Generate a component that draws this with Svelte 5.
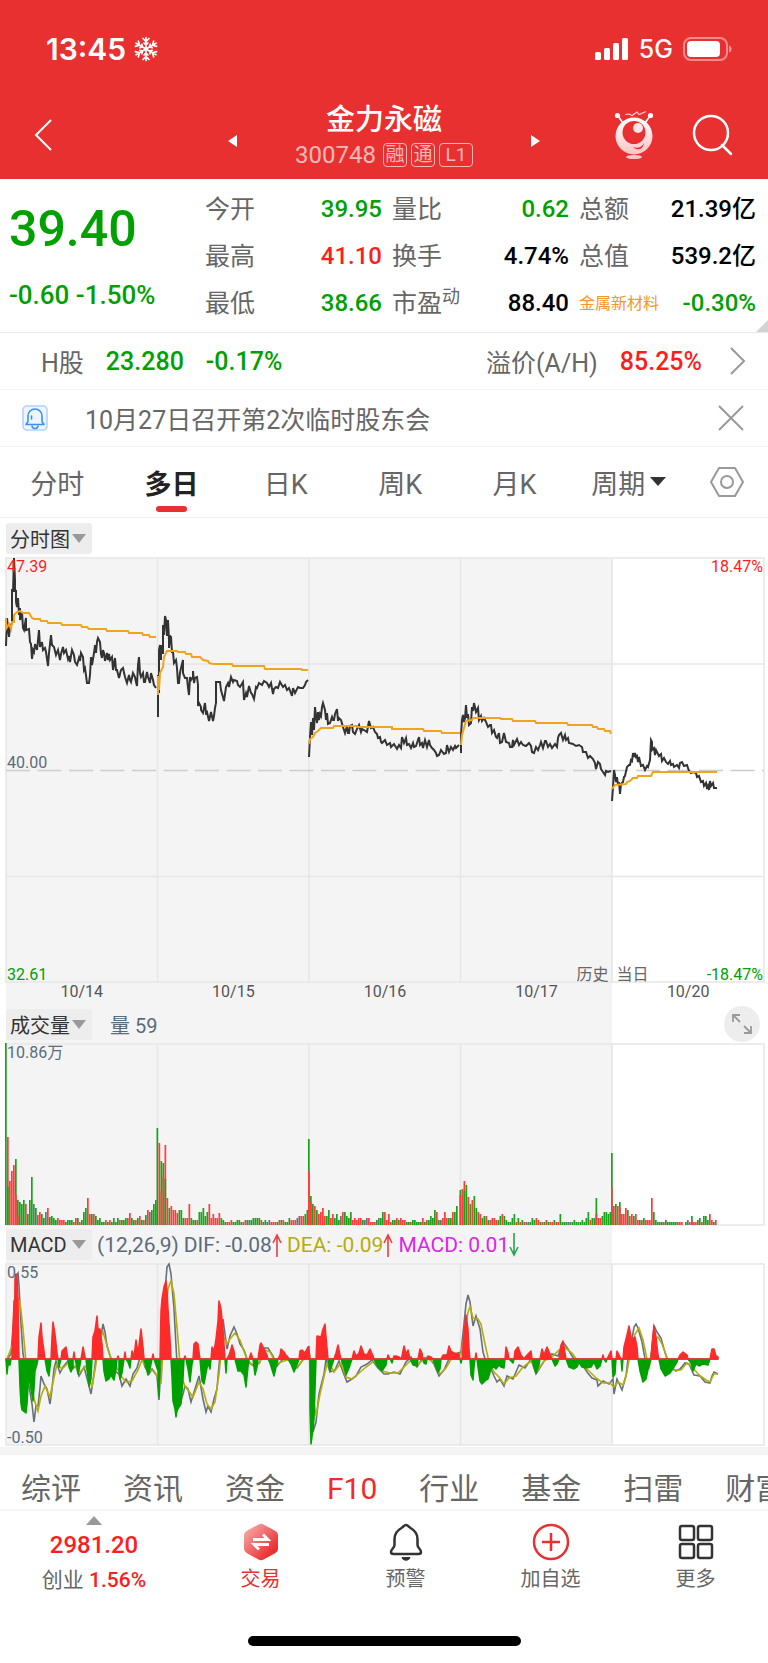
<script lang="ts">

    interface Stat {
        label: string;
        value: string;
        tone?: string;
        sup?: string;
        sector?: boolean;
    }

    const stats: Stat[] = [
        { label: '今开', value: '39.95', tone: 'down' },
        { label: '量比', value: '0.62', tone: 'down' },
        { label: '总额', value: '21.39亿' },
        { label: '最高', value: '41.10', tone: 'up' },
        { label: '换手', value: '4.74%' },
        { label: '总值', value: '539.2亿' },
        { label: '最低', value: '38.66', tone: 'down' },
        { label: '市盈', value: '88.40', sup: '动' },
        { label: '金属新材料', value: '-0.30%', tone: 'down', sector: true }
    ];

    const periods = ['分时', '多日', '日K', '周K', '月K', '周期'];
    let period = $state('多日');

    const sections = ['综评', '资讯', '资金', 'F10', '行业', '基金', '扫雷', '财富'];
    let section = $state('F10');

    const dates = ['10/14', '10/15', '10/16', '10/17', '10/20'];

    const DAY = 151.5;
    const dayLines = [1, 2, 3, 4].map((n) => n * DAY);

    // one polyline per trading day
    const prices = [
        '0,88 1,60 3,79 4,69 6,65 6,31 7,34 8,0 9,22 9,34 10,32 10,44 11,49 12,40 13,57 14,50 14,62 16,54 17,70 18,72 20,60 20,72 23,71 24,84 25,86 26,101 27,92 28,94 29,86 31,92 33,72 34,89 36,84 37,92 39,90 40,94 42,108 43,95 45,77 46,87 48,89 50,97 52,92 54,102 55,96 57,89 58,95 60,92 62,101 63,98 64,104 66,92 68,97 69,104 71,107 73,100 74,103 75,95 77,99 78,112 79,110 81,125 83,125 84,117 85,99 86,107 88,95 89,87 90,95 91,84 92,80 94,84 95,96 96,100 97,92 98,95 99,103 101,95 102,102 103,96 104,102 106,99 107,112 109,100 110,112 111,112 113,120 115,112 117,110 119,119 121,125 123,117 124,122 125,124 127,115 129,119 130,124 131,128 132,107 133,99 134,115 135,119 137,115 138,124 139,124 141,114 142,119 144,125 145,115 147,122 148,127 150,130',
        '152,159 152,117 153,135 153,92 154,87 155,102 155,87 156,95 157,95 157,67 158,77 159,58 160,62 161,78 162,62 163,82 163,90 164,78 165,79 166,94 167,94 168,105 170,102 171,110 172,125 173,125 174,115 175,110 177,102 177,115 179,120 181,120 182,130 183,137 184,119 185,122 187,119 187,113 188,125 189,120 191,119 192,127 192,148 193,145 195,149 195,152 197,155 199,145 200,155 201,154 203,163 205,154 207,163 208,158 209,150 210,145 210,124 214,124 215,132 218,143 220,129 222,125 223,129 225,119 227,124 228,122 231,123 232,127 234,129 237,124 238,142 240,135 241,139 243,128 245,135 246,136 248,141 250,129 251,130 253,125 256,127 258,123 261,125 263,129 265,125 267,136 268,131 270,129 272,130 274,124 277,129 279,127 281,132 283,130 286,138 287,130 289,135 292,129 294,130 297,130 299,127 300,124 302,122',
        '303,199 304,179 305,164 306,177 307,160 308,172 309,149 310,158 311,165 312,154 313,162 314,156 315,158 316,149 317,145 319,152 320,162 321,155 322,166 324,165 326,159 327,162 328,162 329,156 331,151 332,163 333,160 335,162 337,169 339,175 341,168 342,175 343,175 344,168 346,167 347,174 349,176 351,171 353,167 355,174 356,171 358,172 361,174 363,163 365,170 367,169 369,174 371,176 372,180 374,179 375,184 376,185 379,182 381,187 384,185 385,189 388,186 391,191 393,187 395,190 396,179 398,185 400,180 401,187 403,186 405,190 407,185 408,189 410,188 412,182 413,179 414,187 416,185 417,190 419,182 421,189 423,182 424,187 426,190 428,192 430,195 431,198 433,197 435,192 438,196 440,195 441,187 443,194 445,189 447,192 449,188 450,190 453,187',
        '455,195 455,177 456,162 457,157 458,164 459,160 460,147 461,160 462,156 463,167 465,165 466,149 467,153 468,145 470,154 472,150 473,162 475,158 476,163 478,160 480,164 482,169 484,167 485,167 486,175 488,172 490,179 491,180 493,175 494,185 496,184 498,175 500,184 503,185 504,189 506,189 507,182 508,187 511,181 513,187 515,184 517,187 520,188 523,185 525,188 526,194 528,195 530,189 532,192 534,187 535,184 537,190 539,183 540,183 542,189 544,186 546,190 549,186 551,189 552,180 553,177 555,175 557,182 559,177 560,182 562,180 563,185 567,186 570,188 573,187 576,189 577,194 580,194 582,200 584,198 587,201 589,205 590,211 592,204 594,206 595,211 597,214 599,217 600,213 602,214 605,213',
        '606,243 607,229 608,212 609,217 610,224 611,219 612,227 613,224 614,236 615,226 617,224 618,219 619,218 621,209 623,207 624,207 625,202 626,203 627,195 628,199 629,195 630,199 631,198 632,204 633,199 635,208 637,207 639,212 641,208 642,209 644,202 645,182 646,184 646,192 648,190 649,197 650,192 653,198 655,196 656,203 658,200 660,204 662,206 664,203 665,207 667,206 668,209 671,207 673,210 674,205 676,204 678,208 681,207 683,213 685,215 687,214 690,215 691,219 693,218 695,224 697,223 698,228 700,225 701,231 702,228 703,232 704,223 705,228 707,225 708,230 711,230'
    ];

    const averages = [
        '0,60 0,71 3,66 5,71 6,64 8,64 8,57 11,54 14,53 17,55 23,55 26,60 28,61 34,61 35,63 41,63 42,65 55,65 56,67 75,67 76,69 81,69 83,71 100,71 101,73 122,73 123,75 136,75 137,77 143,77 144,79 150,79',
        '152,137 152,118 153,132 154,115 157,109 158,99 160,95 161,93 171,93 172,94 179,94 180,96 185,96 186,99 194,99 197,102 202,103 203,105 207,106 226,106 227,108 258,108 259,111 295,111 296,112 302,112',
        '303,186 304,181 307,179 309,175 312,173 315,170 317,170 327,170 328,168 351,168 352,169 386,169 386,171 417,171 418,173 435,173 436,175 454,175',
        '455,187 456,177 458,170 460,163 466,162 467,160 494,160 495,161 506,161 507,163 529,163 530,165 561,165 562,167 586,167 587,169 591,169 592,171 598,171 599,173 604,173 605,176',
        '606,231 609,227 620,226 621,224 624,223 627,220 631,220 632,218 645,218 647,214 711,214'
    ];

    // g = down, r = up, s = flat; "g86/r54" is a second bar over the first
    const volumes = [
        'g182 r88/g38 r44 r54 r60 g66/r30 g25/r10 g23 g21 g25 r21 g11 g25 g48 s21 g17 r10 r13 g11 g7 s13 r17 g8 g9 g7 g5 r7 r5 r5 r5 g3 g5 g5 g5 r3 r7 g7 r3 g5 g13 g17 r27 r11 g11 r11 g9 g5 g7 g3 g3 r5 g3 r5 g3 g7 g3 g7 r5 g5 g5 g7 r7 r12 g7 g5 r5 g7 r9 g5 r5 g10 r15 s13 g15 g21 g25',
        'g97 r82 g64/r34 g62/r48 r80/g46 r27 g17 r19 r15 r15 r12 g15 g15 g7 r7 r7 r21 g7 g5 g5 r5 g13 g13 g17 g9 g13 r21 r7 r11 r7 r7 r12 g7 g5 g3 r3 r3 r5 g3 g3 g5 g5 g3 r3 r5 g5 s5 g5 g7 g7 g7 g7 r5 g3 g5 g3 s5 r3 r3 r3 g3 r5 g5 r5 g3 g3 g7 r5 r5 r5 s7 s9 r9 r9 g11 g15',
        'g86/r54 g29/r23 g21 r19 g15 r11 r13 r17 r9 g9 g15 r7 r11 g7 g11 g5 s9 r13 g13 g9 g7 g13 r5 r7 r5 r7 r7 g5 s5 s7 r7 r3 r3 r3 g5 s7 g7 g13 r13 r5 r11 r3 g5 g5 r7 g5 r7 r5 r5 g3 g3 r3 g5 g5 g3 g3 g3 r7 g3 r5 g5 g9 g7 g15 r13 g5 s5 r7 r13 r7 g7 g7 r13 g13 g19',
        'g35/r30 r36 r44/g34 g40 r28 g21 r25 g29 g17 r13 r11 g7 g9 r9 g5 r5 r7 r7 r5 g5 g9 r11 g9 g5 g3 g3 g7 g11 r3 g7 r3 g5 r3 s3 s3 g3 g7 g5 r7 r5 g3 r3 g3 r5 g3 r3 r3 g5 r3 r3 g11 g3 g3 g3 s3 s3 g3 g5 g3 g3 g3 g5 g3 g7 g13 r5 g7 g7 g27/r11 r7 r7 g9 g13 g13 g11 g13',
        'g72/r38 r19 g21 r19 g23/r17 r11 r11 r17 g15 r9 r11 g9 r11 r5 g5 r5 g7 r5 r5 r5 r27 g13 g5 g3 s3 g3 r3 g5 g3 g3 g3 g3 g3 r3 r3 r3 g0 g3 s5 r3 g9/r5 r3 r3 g5 g7 r3 g9 g9 g5 r11 r5 g3 r5'
    ];

    const fills: Record<string, string> = { g: '#19a319', r: '#ff3b3b', s: '#66717c' };

    const bars = volumes.flatMap((day, d) =>
        day.split(' ').flatMap((slot, i) =>
            slot.split('/').map((bar) => ({
                x: d * DAY + i * 2,
                h: Number(bar.slice(1)),
                fill: fills[bar[0]]
            }))
        )
    );

    const dif = '0,97 5,90 8,50 10,12 12,9 13,22 15,60 17,90 20,105 24,128 26,140 28,158 30,142 32,142 34,124 35,112 38,120 41,125 44,140 46,125 48,105 50,97 54,109 57,103 62,97 66,105 70,102 73,112 78,103 82,118 85,130 88,110 92,75 95,72 97,60 99,68 101,82 106,98 110,108 113,110 116,122 120,115 124,122 127,110 131,104 135,90 139,103 143,110 146,105 151,112 153,136 155,100 158,40 161,3 163,0 165,10 168,45 171,100 174,140 177,130 179,122 182,125 185,138 189,125 193,112 197,135 200,148 202,142 205,148 208,135 211,125 214,90 217,55 221,85 224,72 228,63 231,70 234,80 238,86 242,98 248,102 254,98 258,84 262,84 267,92 271,102 276,96 281,92 286,98 291,104 296,97 303,82 305,130 307,168 310,158 313,130 318,110 320,95 324,108 329,106 333,97 337,108 341,118 346,115 350,112 355,103 361,100 366,96 372,104 378,110 382,110 388,108 394,110 400,98 405,93 411,103 416,95 422,93 428,100 433,112 438,106 443,95 449,90 455,88 458,60 460,40 462,31 464,38 467,62 470,52 474,65 477,88 480,98 484,102 488,112 491,118 494,115 498,122 501,112 507,115 513,101 519,104 525,95 530,110 535,102 540,94 546,90 552,92 557,78 562,85 566,92 570,97 576,100 581,108 586,114 591,116 592,122 597,117 603,120 607,115 608,130 611,115 616,126 620,112 622,95 626,75 628,63 630,60 632,64 636,78 639,95 643,103 646,85 648,62 651,68 655,74 658,85 661,95 666,104 670,107 674,105 679,99 683,100 688,111 694,112 699,118 704,119 706,112 708,108 712,110';
    const dea = '0,97 7,80 10,40 12,35 14,38 17,65 20,98 25,115 28,135 32,147 35,132 39,122 44,133 47,118 51,100 56,105 62,99 68,102 74,108 80,102 86,123 90,100 94,75 97,68 100,78 104,92 109,100 115,112 120,118 126,117 132,106 136,96 142,106 148,107 153,115 155,120 158,70 162,25 165,17 168,30 172,75 175,112 179,122 187,133 193,118 197,125 201,140 205,145 209,138 213,110 217,72 221,80 224,75 229,69 234,76 240,93 245,100 253,100 259,86 264,88 270,100 278,97 285,95 291,103 298,95 303,86 306,125 310,152 314,130 319,108 322,97 328,108 335,99 340,113 346,115 352,110 360,103 368,97 376,107 384,109 392,109 400,101 406,95 412,100 420,94 428,98 434,110 440,104 447,92 455,90 459,68 462,48 464,43 467,54 472,55 475,60 479,80 483,98 488,108 493,113 498,120 503,114 510,112 517,103 525,97 531,107 538,97 547,92 557,82 566,89 574,100 582,106 590,114 597,119 604,119 608,123 612,118 617,121 621,108 625,85 629,70 633,64 637,76 641,95 644,100 648,75 652,73 656,80 662,96 668,106 675,106 681,99 687,104 693,111 700,116 704,118 708,110 712,110';

    // x,value pairs, value is the height over (or under) the zero line
    const histogram = '0,0 1,-15 2,-6 4,-6 5,0 6,2 7,30 8,58 9,60 9,80 10,85 11,83 12,60 13,0 14,-28 15,-45 16,-51 20,-54 21,-45 22,-28 24,-18 25,-30 27,-42 28,-30 29,-12 31,-5 32,0 33,22 35,36 36,22 38,8 39,0 41,-12 43,-17 44,-8 45,0 46,22 47,37 49,25 51,6 52,0 53,-8 55,0 56,8 58,10 60,12 61,6 62,0 63,-8 65,-13 67,-8 67,0 68,7 69,0 71,-8 72,-15 74,-6 75,0 77,12 79,2 80,0 81,-10 83,-27 85,-20 86,0 87,22 89,28 91,43 92,30 94,30 96,15 97,0 98,-12 100,-22 103,-20 105,-16 108,-21 110,-10 111,0 112,3 113,0 113,-12 114,-20 116,-14 118,0 119,7 120,0 122,-3 124,-9 125,0 126,8 128,2 130,19 132,5 134,22 135,30 137,12 138,0 140,-8 142,-16 144,-10 145,-5 146,0 147,5 148,0 150,-6 152,-12 153,-37 154,0 155,48 156,60 158,72 160,78 161,68 162,50 164,20 165,0 166,-18 167,-42 169,-50 170,-58 171,-52 173,-48 175,-45 177,-20 178,0 179,3 180,0 182,-10 184,-23 186,-5 187,0 188,15 190,17 192,15 194,0 195,-12 196,-22 198,-25 200,-14 202,-4 204,-10 205,0 206,12 208,8 210,20 212,38 213,58 215,50 217,30 218,15 219,0 220,-14 221,0 223,4 225,10 226,14 228,8 229,0 232,-12 235,-12 238,-16 240,-28 242,-8 243,0 245,6 247,0 249,-16 251,-8 252,0 254,14 255,16 258,10 261,4 262,0 264,-4 268,-17 270,-8 272,0 274,4 275,10 278,7 281,2 282,0 285,-5 288,-13 290,-8 292,-3 293,0 294,8 296,9 299,6 302,12 303,9 304,0 304,-50 305,-85 307,-70 308,-60 310,0 311,23 315,22 317,30 319,35 320,22 322,0 324,-12 326,-6 328,0 330,6 332,14 334,4 335,0 338,-8 340,-16 343,-9 346,0 348,8 350,3 353,6 355,13 358,5 361,4 364,10 367,3 368,0 372,-8 376,-12 380,-6 381,0 382,4 384,0 386,-4 387,0 388,3 390,3 393,2 395,0 396,3 398,13 400,5 402,9 404,0 407,-6 411,-7 412,0 414,10 416,6 417,0 418,-4 420,-5 421,0 422,3 425,2 427,0 430,-8 432,-13 434,-10 435,0 437,4 441,4 443,13 445,8 448,6 453,5 454,0 455,-4 456,0 458,25 460,44 462,30 463,10 464,0 465,-16 467,-21 468,-8 469,0 470,6 471,0 472,-8 474,-22 476,-25 479,-22 482,-20 485,-10 488,-8 490,-10 493,-6 495,-8 498,-9 499,0 500,12 502,6 503,0 507,-4 508,0 509,8 512,12 515,4 518,0 521,4 525,8 526,0 528,-8 530,-14 533,-6 534,0 536,10 538,4 541,12 544,5 546,0 549,-7 551,-5 553,0 555,14 557,18 559,6 560,0 563,-8 568,-10 571,-8 573,-3 576,-8 580,-9 585,-8 588,-3 591,-10 594,-7 596,0 597,4 598,0 600,-3 601,0 602,2 605,8 606,0 607,-18 609,-15 610,0 611,8 613,4 615,0 616,-12 617,0 618,12 621,24 623,33 625,22 627,20 629,22 631,12 632,0 634,-12 637,-23 640,-20 643,-6 645,0 646,15 648,33 650,22 652,4 653,0 655,-10 659,-17 664,-14 668,-8 671,-3 672,0 674,4 677,7 681,4 682,0 685,-4 687,-12 690,-5 693,-7 697,-5 702,-6 704,0 706,10 708,10 710,3 712,2'
        .split(' ')
        .map((p) => p.split(',').map(Number));

    const ZERO = 95;

    function area(sign: number): string {
        const top = histogram.map(([x, v]) => `${x},${v * sign > 0 ? ZERO - v : ZERO}`);
        return `0,${ZERO} ${top.join(' ')} 712,${ZERO}`;
    }

</script>

{#snippet grid(height: number)}
    {#each dayLines as x}
        <line class="grid-line" x1={x} x2={x} y1="0" y2={height} />
    {/each}
    <rect class="grid-line" x="0" y="0" width="758" height={height} />
{/snippet}

<div class="app">
    <header>
        <div class="status-bar">
            <div class="clock">
                <span>13:45</span>
                <svg width="24" height="26" viewBox="0 0 24 26" fill="none" stroke="#fff" stroke-width="1.700" stroke-linecap="round">
                    {#each [0, 60, 120, 180, 240, 300] as angle}
                        <path transform="rotate({angle} 12 13)" d="M12 13V1.500M9 2.500l3 3 3-3M10 7l2 2 2-2" />
                    {/each}
                </svg>
            </div>
            <div class="signal">
                <svg width="34" height="24" viewBox="0 0 34 24" fill="#fff">
                    <rect x="0" y="15" width="6" height="8" rx="1.500" />
                    <rect x="9" y="11" width="6" height="12" rx="1.500" />
                    <rect x="18" y="6" width="6" height="17" rx="1.500" />
                    <rect x="27" y="1" width="6" height="22" rx="1.500" />
                </svg>
                <span>5G</span>
                <svg width="50" height="24" viewBox="0 0 50 24">
                    <rect x="1" y="1" width="43" height="22" rx="7" fill="none" stroke="#fff" stroke-opacity="0.450" stroke-width="2" />
                    <rect x="4" y="4" width="33" height="16" rx="4" fill="#fff" />
                    <path d="M46 8.500c3.500 1 3.500 6 0 7z" fill="#fff" fill-opacity="0.500" />
                </svg>
            </div>
        </div>
        <div class="title-bar">
            <button class="back" aria-label="返回">
                <svg width="18" height="32" viewBox="0 0 18 32" fill="none" stroke="#fff" stroke-width="2"><path d="M17 1L2 16l15 15" /></svg>
            </button>
            <div class="switcher">
                <button aria-label="上一只"><svg width="9" height="12" viewBox="0 0 9 12"><path d="M9 0v12L0 6z" fill="#fff" /></svg></button>
                <div class="title">
                    <h1>金力永磁</h1>
                    <div class="code">
                        <span>300748</span>
                        <i>融</i><i>通</i><i class="wide">L1</i>
                    </div>
                </div>
                <button aria-label="下一只"><svg width="9" height="12" viewBox="0 0 9 12"><path d="M0 0v12l9-6z" fill="#fff" /></svg></button>
            </div>
            <div class="actions">
                <button aria-label="助手">
                    <svg width="40" height="48" viewBox="0 0 40 48">
                        <defs>
                            <linearGradient id="robot" x1="0" y1="0" x2="0" y2="1">
                                <stop offset="0" stop-color="#fff" />
                                <stop offset="1" stop-color="#ffc4c6" />
                            </linearGradient>
                        </defs>
                        <path d="M4 5l5 7M36 5l-5 7" stroke="#fff" stroke-width="1.600" />
                        <path d="M11 3.500l4-.5 3 1.500L23 1l2 2.500L32 .5" fill="none" stroke="#ffd5d5" stroke-width="1.100" />
                        <circle cx="3.500" cy="4.500" r="2.600" fill="#fff" />
                        <circle cx="36.500" cy="4.500" r="2.600" fill="#fff" />
                        <circle cx="20" cy="25" r="18.500" fill="url(#robot)" />
                        <circle cx="20" cy="21.500" r="11.500" fill="#e93030" />
                        <circle cx="24" cy="17" r="5" fill="#ffe4e5" />
                        <path d="M19 36c5 2 9 0 11-4-1 7-7 8-11 4z" fill="#e93030" />
                        <ellipse cx="20" cy="46" rx="8" ry="2" fill="#ffc4c6" />
                    </svg>
                </button>
                <button aria-label="搜索">
                    <svg width="42" height="42" viewBox="0 0 42 42" fill="none" stroke="#fff" stroke-width="2.500" stroke-linecap="round">
                        <circle cx="19" cy="19" r="17" />
                        <path d="M30 31l9 9" />
                    </svg>
                </button>
            </div>
        </div>
    </header>

    <section class="quote">
        <div class="last down">
            <strong>39.40</strong>
            <span>-0.60 -1.50%</span>
        </div>
        <dl class="stats">
            {#each stats as stat}
                <div class="stat">
                    <dt class:sector={stat.sector}>{stat.label}{#if stat.sup}<sup>{stat.sup}</sup>{/if}</dt>
                    <dd class={stat.tone}>{stat.value}</dd>
                </div>
            {/each}
        </dl>
        <svg class="corner" width="12" height="12" viewBox="0 0 12 12"><path d="M12 0v12H0z" fill="#d3d3d3" /></svg>
    </section>

    <a class="row h-share" href="#h-share">
        <span>H股</span>
        <b class="down">23.280</b>
        <b class="down">-0.17%</b>
        <span class="premium">溢价(A/H)</span>
        <b class="up">85.25%</b>
        <svg width="16" height="28" viewBox="0 0 16 28" fill="none" stroke="#999" stroke-width="2"><path d="M1 1l13 13L1 27" /></svg>
    </a>

    <div class="row notice">
        <svg width="26" height="26" viewBox="0 0 26 26" fill="none" stroke="#3b8ff3" stroke-width="1.600">
            <rect x="1" y="1" width="24" height="24" rx="4" fill="#eef5ff" stroke="#b3d2fb" />
            <path d="M4 19.500h18l-2-3v-5.500a7 7 0 0 0-14 0v5.500z" stroke-linejoin="round" />
            <path d="M10 20.500a3 3 0 0 0 6 0" />
            <path d="M9.500 14v-3" stroke-linecap="round" />
        </svg>
        <span>10月27日召开第2次临时股东会</span>
        <button aria-label="关闭">
            <svg width="26" height="26" viewBox="0 0 26 26" stroke="#999" stroke-width="2"><path d="M1 1l24 24M25 1L1 25" /></svg>
        </button>
    </div>

    <nav class="periods">
        {#each periods as name}
            <button class:active={period === name} onclick={() => (period = name)}>
                {name}{#if name === '周期'}<svg width="16" height="10" viewBox="0 0 16 10"><path d="M0 0h16L8 9z" fill="#333" /></svg>{/if}
            </button>
        {/each}
        <button class="settings" aria-label="设置">
            <svg width="34" height="32" viewBox="0 0 34 32" fill="none" stroke="#999" stroke-width="2">
                <path d="M9 2h16l8 14-8 14H9L1 16z" stroke-linejoin="round" />
                <circle cx="17" cy="16" r="6" />
            </svg>
        </button>
    </nav>

    <div class="chart-kind">
        <button class="picker">分时图<svg width="14" height="9" viewBox="0 0 14 9"><path d="M0 0h14L7 9z" /></svg></button>
    </div>

    <main class="charts">
        <div class="plot">
            <svg viewBox="0 0 758 424" height="424" preserveAspectRatio="none">
                {@render grid(424)}
                <line class="grid-line" x1="0" x2="758" y1="106" y2="106" />
                <line class="grid-line" x1="0" x2="758" y1="318.500" y2="318.500" />
                <line x1="0" x2="758" y1="212.500" y2="212.500" stroke="#ccc" stroke-width="1.500" stroke-dasharray="24 7.500" />
                {#each prices as points}
                    <polyline {points} fill="none" stroke="#333" stroke-width="2" />
                {/each}
                {#each averages as points}
                    <polyline {points} fill="none" stroke="#f0a31c" stroke-width="2" />
                {/each}
            </svg>
            <span class="mark top left up">47.39</span>
            <span class="mark top right up">18.47%</span>
            <span class="mark middle left">40.00</span>
            <span class="mark bottom left down">32.61</span>
            <span class="mark bottom right down">-18.47%</span>
            <span class="mark bottom split"><span>历史</span><span>当日</span></span>
        </div>
        <div class="dates">
            {#each dates as date}
                <span>{date}</span>
            {/each}
        </div>

        <div class="toolbar volume-bar">
            <button class="picker">成交量<svg width="14" height="9" viewBox="0 0 14 9"><path d="M0 0h14L7 9z" /></svg></button>
            <span class="slate">量 59</span>
            <button class="expand" aria-label="全屏">
                <svg width="20" height="20" viewBox="0 0 20 20" fill="none" stroke="#999" stroke-width="1.800"><path d="M1 8V1h7M1 1l7 7M19 12v7h-7M19 19l-7-7" /></svg>
            </button>
        </div>
        <div class="plot">
            <svg viewBox="0 0 758 181" height="181" preserveAspectRatio="none">
                {@render grid(181)}
                {#each bars as bar}
                    <rect x={bar.x - 1} y={181 - bar.h} width="1.700" height={bar.h} fill={bar.fill} />
                {/each}
            </svg>
            <span class="mark top left">10.86万</span>
        </div>

        <div class="toolbar macd-bar">
            <button class="picker">MACD<svg width="14" height="9" viewBox="0 0 14 9"><path d="M0 0h14L7 9z" /></svg></button>
            <span class="slate">(12,26,9)</span>
            <span class="slate">DIF: -0.08<svg width="10" height="24" viewBox="0 0 10 24" fill="none" stroke="#f23b3b" stroke-width="1.600"><path d="M5 24V2M1 10l4-8 4 8" /></svg></span>
            <span class="olive">DEA: -0.09<svg width="10" height="24" viewBox="0 0 10 24" fill="none" stroke="#f23b3b" stroke-width="1.600"><path d="M5 24V2M1 10l4-8 4 8" /></svg></span>
            <span class="magenta">MACD: 0.01<svg width="10" height="24" viewBox="0 0 10 24" fill="none" stroke="#2aa34f" stroke-width="1.600"><path d="M5 0v22M1 14l4 8 4-8" /></svg></span>
        </div>
        <div class="plot">
            <svg viewBox="0 0 758 181" height="181" preserveAspectRatio="none">
                {@render grid(181)}
                <polyline points={dif} fill="none" stroke="#66717c" stroke-width="1.600" />
                <polyline points={dea} fill="none" stroke="#b5ad0c" stroke-width="1.600" />
                <polygon points={area(-1)} fill="#00a000" stroke="#00a000" stroke-width="1.500" stroke-linejoin="round" />
                <polygon points={area(1)} fill="#ff2a2a" stroke="#ff2a2a" stroke-width="1.500" stroke-linejoin="round" />
            </svg>
            <span class="mark top left">0.55</span>
            <span class="mark bottom left">-0.50</span>
        </div>
    </main>

    <nav class="sections">
        {#each sections as name}
            <button class:active={section === name} onclick={() => (section = name)}>{name}</button>
        {/each}
    </nav>

    <footer>
        <button class="index up">
            <svg width="16" height="9" viewBox="0 0 16 9"><path d="M8 0l8 9H0z" fill="#999" /></svg>
            <strong>2981.20</strong>
            <span><em>创业</em> 1.56%</span>
        </button>
        <button class="trade">
            <svg width="36" height="38" viewBox="0 0 36 38">
                <defs>
                    <linearGradient id="trade" x1="0" y1="0" x2="1" y2="1">
                        <stop offset="0.100" stop-color="#f8a5a5" />
                        <stop offset="0.800" stop-color="#e93030" />
                    </linearGradient>
                </defs>
                <path d="M15.500 1.500q2.500-1.500 5 0l12 6.500q2.500 1.500 2.500 4v14q0 2.500-2.500 4l-12 6.500q-2.500 1.500-5 0l-12-6.500Q1 28.500 1 26V12q0-2.500 2.500-4z" fill="url(#trade)" />
                <path d="M10 16.500h15l-5-5M26 21.500H11l5 5" fill="none" stroke="#fff" stroke-width="2.800" />
            </svg>
            <span>交易</span>
        </button>
        <button>
            <svg width="34" height="38" viewBox="0 0 34 38" fill="none" stroke="#333" stroke-width="2.500" stroke-linejoin="round">
                <path d="M17 2c-2 0-2.500 2-4.500 3C8 7.500 5.500 11 5.500 16v6c0 3-3.500 4-3.500 7 0 1.500 1 2 2.500 2h25c1.500 0 2.500-.5 2.500-2 0-3-3.500-4-3.500-7v-6c0-5-2.500-8.500-7-11C19.500 4 19 2 17 2z" />
                <path d="M12.500 34h9c-1 5-8 5-9 0z" fill="#333" stroke="none" />
            </svg>
            <span>预警</span>
        </button>
        <button>
            <svg width="38" height="38" viewBox="0 0 38 38" fill="none" stroke="#e93030" stroke-width="2.500">
                <circle cx="19" cy="19" r="17" />
                <path d="M19 10v18M10 19h18" />
            </svg>
            <span>加自选</span>
        </button>
        <button>
            <svg width="36" height="38" viewBox="0 0 36 38" fill="none" stroke="#333" stroke-width="2.500">
                <rect x="2" y="3" width="14" height="14" rx="2" />
                <rect x="20" y="3" width="14" height="14" rx="2" />
                <rect x="2" y="21" width="14" height="14" rx="2" />
                <rect x="20" y="21" width="14" height="14" rx="2" />
            </svg>
            <span>更多</span>
        </button>
    </footer>
    <div class="home-indicator"></div>
</div>

<style>
    :global(body) {
        background: #fff;
    }

    .app {
        font-family: Roboto, "Noto Sans CJK SC", sans-serif;
        font-size: 24px;
        color: #666;
        overflow: hidden;
    }

    button {
        font: inherit;
        color: inherit;
        background: none;
        border: 0;
        padding: 0;
        margin: 0;
        cursor: pointer;
    }

    svg {
        display: block;
        flex: none;
    }

    .up {
        color: #fc1d1d;
    }

    .down {
        color: #00a000;
    }

    header {
        background: #e93030;
        color: #fff;
        padding-bottom: 7px;
    }

    .status-bar {
        display: flex;
        justify-content: space-between;
        align-items: center;
        height: 98px;
        padding: 0 35px 0 46px;
        font-family: Inter, sans-serif;
    }

    .clock, .signal {
        display: flex;
        align-items: center;
    }

    .clock {
        gap: 8px;
        font-size: 30px;
        font-weight: 600;
    }

    .signal {
        gap: 10px;
        font-size: 25px;
        font-weight: 500;
    }

    .title-bar {
        display: grid;
        grid-template-columns: 1fr auto 1fr;
        align-items: center;
        height: 74px;
        padding: 0 34px;
    }

    .back {
        justify-self: start;
    }

    .switcher {
        display: flex;
        align-items: center;
        gap: 58px;
    }

    .switcher button {
        padding-top: 12px;
    }

    .title {
        text-align: center;
    }

    h1 {
        margin: 0;
        font-size: 29px;
        font-weight: 500;
        line-height: 40px;
    }

    .code {
        display: flex;
        align-items: center;
        gap: 4px;
        line-height: 30px;
        opacity: 0.65;
    }

    .code span {
        margin-right: 3px;
    }

    .code i {
        box-sizing: border-box;
        width: 24px;
        height: 24px;
        border: 1px solid #fff;
        border-radius: 4px;
        font-size: 19px;
        font-style: normal;
        line-height: 22px;
    }

    .code .wide {
        width: 34px;
    }

    .actions {
        display: flex;
        align-items: center;
        justify-content: flex-end;
        gap: 38px;
    }

    .quote {
        position: relative;
        display: flex;
        gap: 10px;
        padding: 7px 12px 5px 9px;
        border-bottom: 1px solid #eaeaea;
    }

    .last {
        width: 186px;
        font-weight: 500;
    }

    .last strong {
        display: block;
        font-size: 50px;
        font-weight: 500;
        line-height: 86px;
    }

    .last span {
        display: block;
        font-size: 26px;
        line-height: 46px;
        white-space: nowrap;
    }

    .stats {
        flex: 1;
        display: grid;
        grid-template-columns: repeat(3, 1fr);
        column-gap: 10px;
        margin: 0;
    }

    .stat {
        display: flex;
        justify-content: space-between;
        line-height: 47px;
        white-space: nowrap;
    }

    dt {
        font-size: 25px;
    }

    dt.sector {
        font-size: 16px;
        color: #f7952c;
    }

    sup {
        font-size: 18px;
        line-height: 0;
    }

    dd {
        margin: 0;
        font-weight: 500;
    }

    dd:not(.up, .down) {
        color: #000;
    }

    .corner {
        position: absolute;
        right: 0;
        bottom: 0;
    }

    .row {
        display: flex;
        align-items: center;
        height: 56px;
        border-bottom: 1px solid #f3f3f3;
        color: inherit;
        text-decoration: none;
    }

    .h-share {
        gap: 22px;
        padding: 0 22px 0 41px;
        font-size: 25px;
    }

    .h-share b {
        font-weight: 500;
    }

    .h-share .up {
        margin-right: 6px;
    }

    .premium {
        margin-left: auto;
    }

    .notice {
        padding: 0 24px 0 22px;
        font-size: 25px;
    }

    .notice span {
        flex: 1;
        margin-left: 37px;
    }

    .periods {
        display: flex;
        height: 70px;
        border-bottom: 1px solid #efefef;
        font-size: 27px;
    }

    .periods button {
        position: relative;
        flex: 1;
        display: flex;
        align-items: center;
        justify-content: center;
        gap: 5px;
    }

    .periods .settings {
        flex: none;
        width: 82px;
    }

    .periods .active {
        color: #222;
        font-weight: 700;
    }

    .periods .active::after {
        content: "";
        position: absolute;
        bottom: 5px;
        width: 31px;
        height: 6px;
        border-radius: 3px;
        background: #e93030;
    }

    .chart-kind {
        padding: 5px 6px 4px;
    }

    .picker {
        display: flex;
        align-items: center;
        justify-content: space-between;
        width: 86px;
        height: 31px;
        padding: 0 6px 0 4px;
        border-radius: 3px;
        background: #ededed;
        color: #333;
        font-size: 20px;
        white-space: nowrap;
    }

    .picker svg {
        fill: #999;
    }

    .charts {
        margin: 0 4px 2px 6px;
        background: linear-gradient(to right, #f4f4f4 80%, #fff 80%);
        font-size: 16px;
    }

    .plot {
        position: relative;
    }

    .plot > svg {
        width: 100%;
        overflow: visible;
    }

    .grid-line {
        fill: none;
        stroke: #e6e6e6;
        stroke-width: 1.5;
    }

    .mark {
        position: absolute;
        line-height: 18px;
        color: #5a6b7c;
    }

    .mark.up {
        color: #fc1d1d;
    }

    .mark.down {
        color: #00a000;
    }

    .mark.left {
        left: 1px;
    }

    .mark.right {
        right: 1px;
    }

    .mark.top {
        top: 0;
    }

    .mark.middle {
        bottom: 50%;
        line-height: 14px;
    }

    .mark.bottom {
        bottom: 0;
        line-height: 14px;
    }

    .mark.split {
        left: 80%;
        display: flex;
        gap: 8px;
        color: #666;
        transform: translateX(-50%);
    }

    .dates {
        display: flex;
        height: 22px;
        line-height: 20px;
        color: #555;
    }

    .dates span {
        flex: 1;
        text-align: center;
    }

    .toolbar {
        display: flex;
        align-items: center;
        font-size: 20px;
    }

    .toolbar span {
        display: flex;
        align-items: center;
        white-space: nowrap;
    }

    .volume-bar {
        gap: 18px;
        height: 40px;
    }

    .macd-bar {
        gap: 5px;
        height: 39px;
        font-size: 21px;
    }

    .slate {
        color: #5a6b7c;
    }

    .olive {
        color: #b5ad0c;
    }

    .magenta {
        color: #d926e6;
    }

    .expand {
        display: flex;
        align-items: center;
        justify-content: center;
        width: 36px;
        height: 36px;
        margin-left: auto;
        margin-right: 4px;
        border-radius: 50%;
        background: #ededed;
    }

    .sections {
        display: flex;
        gap: 42px;
        height: 54px;
        padding: 0 0 0 21px;
        border-top: 8px solid #f4f4f4;
        border-bottom: 2px solid #f4f4f4;
        overflow: hidden;
        font-size: 30px;
    }

    .sections button {
        flex: none;
        padding-top: 14px;
        line-height: 40px;
    }

    .sections .active {
        color: #f02b2b;
    }

    footer {
        display: flex;
        height: 88px;
        font-size: 20px;
    }

    footer button {
        flex: 145;
        display: flex;
        flex-direction: column;
        align-items: center;
        justify-content: flex-start;
        gap: 3px;
        padding-top: 12px;
        line-height: 30px;
    }

    footer .index {
        flex: 188;
        gap: 0;
        padding-top: 5px;
        color: #fc1d1d;
        font-size: 21px;
        font-weight: 500;
    }

    .index strong {
        font-size: 24px;
        font-weight: 500;
        line-height: 40px;
    }

    .index em {
        color: #666;
        font-style: normal;
        font-weight: 400;
    }

    .trade {
        color: #e93030;
    }

    .home-indicator {
        width: 273px;
        height: 10px;
        margin: 37px auto 17px;
        border-radius: 5px;
        background: #000;
    }

</style>
